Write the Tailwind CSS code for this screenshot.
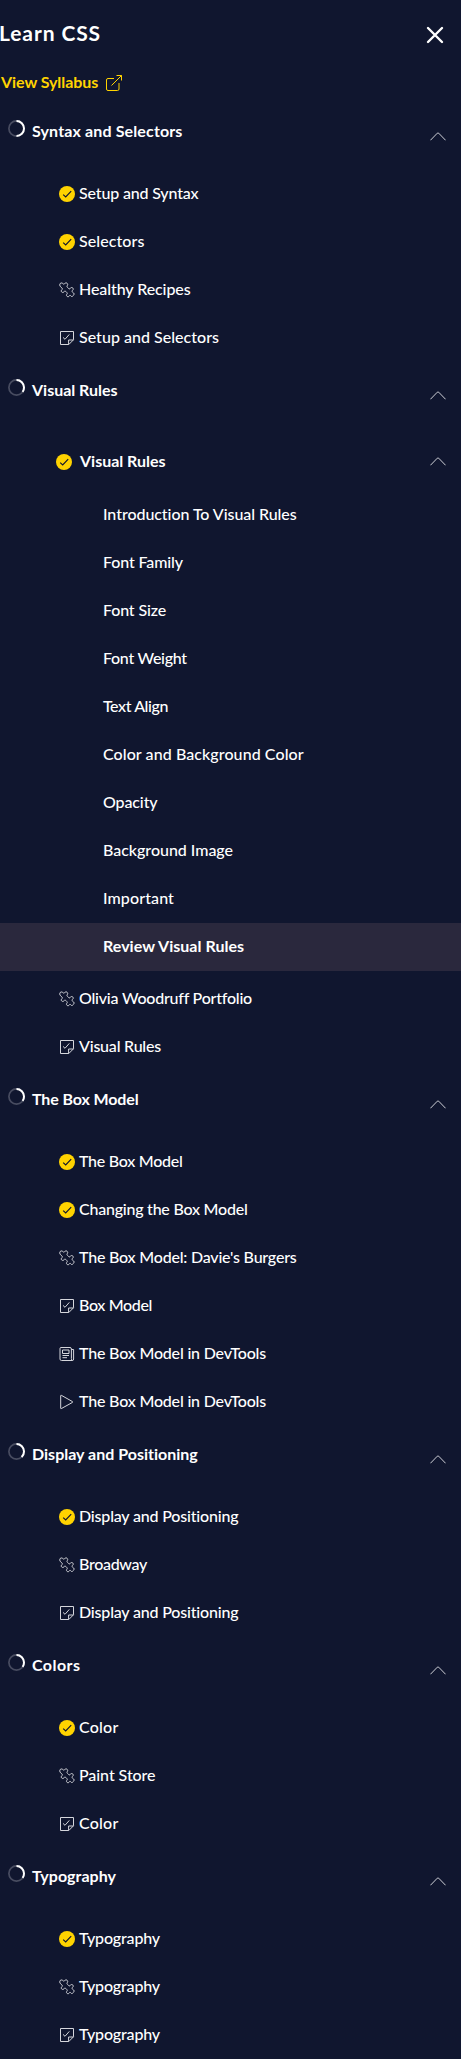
<!DOCTYPE html>
<html lang="en">
<head>
<meta charset="utf-8">
<title>Learn CSS</title>
<script src="https://cdn.jsdelivr.net/npm/@tailwindcss/browser@4"></script>
</head>
<body class="bg-[#10162f] font-['Lato','Open_Sans',sans-serif] text-base font-medium text-white">
<svg class="hidden">
  <symbol id="check" viewBox="0 0 16 16"><circle cx="8" cy="8" r="8" fill="#ffd300"/><path d="M4.2 8.7 6.7 11 12.2 5.2" fill="none" stroke="#10162f" stroke-width="1.15"/></symbol>
  <symbol id="puzzle" viewBox="0 0 16 16"><path d="M1.4 1.3C2.2.6 3.3 1 4 1.7 4.7 2.3 5.300 2.300 5.700 1.600 6.200.8 7.200.6 8 1.200 8.900 1.900 8.900 2.900 8.300 3.600 7.700 4.400 8.100 5 8.900 5.800L9.700 6.600C10.400 7.200 10.900 6.800 11.400 6.100 12.100 5.300 13.200 5.400 13.900 6.100 14.500 6.900 14.200 7.900 13.500 8.400 12.700 9 12.800 9.600 13.500 10.100L14.600 11C15.300 11.700 15.100 12.600 14.500 13.300L13.600 14.200C12.900 14.800 12.200 14.500 11.800 13.800 11.300 13.100 10.600 13.200 10.300 13.900 9.900 14.700 8.900 15 8.100 14.400 7.300 13.700 7.300 12.900 7.900 12.200 8.500 11.500 8.300 11 7.600 10.300L6.700 9.400C6 8.800 5.500 9.100 5 9.800 4.400 10.600 3.300 10.700 2.600 9.900 1.900 9.200 2.200 8.200 3 7.700 3.700 7.200 3.600 6.700 2.900 6L1.500 4.700C.7 3.900.4 2.300 1.400 1.300Z" fill="none" stroke="#d5d6dc" stroke-width="1"/></symbol>
  <symbol id="quiz" viewBox="0 0 16 16"><path d="M1.500 1.500H14.500V9.800L9.800 14.500H1.500Z M9.600 14.300V10H14.400M4 7.400 6 9.300 10.300 4.400" fill="none" stroke="#d5d6dc" stroke-width="1" stroke-linejoin="round"/></symbol>
  <symbol id="article" viewBox="0 0 16 16"><path d="M2 1.500H11Q12.400 1.500 12.400 3V12.500Q12.400 14.500 13.500 14.500H2.500Q1 14.500 1 13V2.500Q1 1.500 2 1.500ZM12.400 3.500H14.600V13Q14.600 14.500 13.500 14.500M3.500 4H10V7.500H3.500ZM3.500 9.500H10M3.500 11.700H8" fill="none" stroke="#d5d6dc" stroke-width="1"/></symbol>
  <symbol id="video" viewBox="0 0 16 16"><path d="M1.700 1.700V14.300Q1.700 14.900 2.300 14.600L13.500 8.400Q14 8 13.500 7.600L2.300 1.300Q1.700 1 1.700 1.700Z" fill="none" stroke="#d5d6dc" stroke-width="1"/></symbol>
  <symbol id="chevron" viewBox="0 0 16 9"><path d="M.4 8.300 7.300 1.200Q8 .5 8.700 1.200L15.600 8.300" fill="none" stroke="#d0d1d8" stroke-width="1"/></symbol>
</svg>

<header class="flex h-[70px] items-start justify-between pr-[17px]">
  <h1 class="-ml-px pt-[19px] text-[21px] leading-[28px] font-bold whitespace-nowrap" data-font="700 21px Lato" data-width="102">Learn CSS</h1>
  <svg class="mt-[26px] h-[18px] w-[18px]" viewBox="0 0 18 18"><path d="M2 2 16 16M16 2 2 16" stroke="#fff" stroke-width="2.400" stroke-linecap="round"/></svg>
</header>
<a class="flex h-[33px] items-start pl-px leading-6 font-bold text-[#ffd300]">
  <span class="w-[105px] whitespace-nowrap"><span data-font="700 16px Lato" data-width="97.5">View Syllabus</span></span>
  <svg class="mt-[5px] h-4 w-4" viewBox="0 0 16 16"><path d="M8 3.500H2Q.5 3.500.5 5V14Q.5 15.500 2 15.500H11.500Q13 15.500 13 14V8M5.500 10.500 15.500.5M10.500.5H15.500V5.500" fill="none" stroke="#ffd300"/></svg>
</a>
<nav id="syllabus"></nav>

<script>
const sections = [
  { title: 'Syntax and Selectors', width: 150.5, done: 50, items: [
    ['check', 'Setup and Syntax', 119.5], ['check', 'Selectors', 65.5], ['puzzle', 'Healthy Recipes', 112], ['quiz', 'Setup and Selectors', 140]] },
  { title: 'Visual Rules', width: 85.5, done: 35,
    lesson: { title: 'Visual Rules', width: 85.5, exercises: [
      ['Introduction To Visual Rules', 195], ['Font Family', 80], ['Font Size', 63], ['Font Weight', 84], ['Text Align', 65.5], ['Color and Background Color', 201], ['Opacity', 54.5], ['Background Image', 130], ['Important', 71], ['Review Visual Rules', 142]] },
    items: [['puzzle', 'Olivia Woodruff Portfolio', 172.5], ['quiz', 'Visual Rules', 82]] },
  { title: 'The Box Model', width: 106.5, done: 35, items: [
    ['check', 'The Box Model', 103.5], ['check', 'Changing the Box Model', 168.5], ['puzzle', "The Box Model: Davie's Burgers", 217.5], ['quiz', 'Box Model', 73], ['article', 'The Box Model in DevTools', 187], ['video', 'The Box Model in DevTools', 187]] },
  { title: 'Display and Positioning', width: 166.5, done: 38, items: [
    ['check', 'Display and Positioning', 160], ['puzzle', 'Broadway', 68], ['quiz', 'Display and Positioning', 160]] },
  { title: 'Colors', width: 48.5, done: 35, items: [
    ['check', 'Color', 39.5], ['puzzle', 'Paint Store', 76.5], ['quiz', 'Color', 39.5]] },
  { title: 'Typography', width: 84, done: 35, items: [
    ['check', 'Typography', 81], ['puzzle', 'Typography', 81], ['quiz', 'Typography', 81]] },
];
const label = (text, width, weight = 500) => `<span class="block pb-0.5 whitespace-nowrap" data-font="${weight} 16px Lato" data-width="${width}">${text}</span>`;
const chevron = (cls) => `<svg class="${cls}"><use href="#chevron"/></svg>`;
const head = (s) => `
  <h2 class="flex h-[67px] items-start pr-[15px] pl-2 leading-6 font-bold">
    <svg class="mt-[17px] h-[17px] w-[17px]" viewBox="0 0 17 17"><circle cx="8.500" cy="8.500" r="7.600" fill="none" stroke="#484c60" stroke-width="1.700"/><circle cx="8.500" cy="8.500" r="7.500" fill="none" stroke="#fff" stroke-width="2" pathLength="100" stroke-dasharray="${s.done} 100" transform="rotate(-90 8.500 8.500)"/></svg>
    <span class="grow pt-4 pl-[7px]">${label(s.title, s.width, 700)}</span>
    ${chevron('mt-[29px] h-[9px] w-4')}
  </h2>`;
const lesson = (l) => `
  <h3 class="flex h-[62px] items-center pt-1 pr-[15px] pl-14 font-bold">
    <svg class="h-4 w-4"><use href="#check"/></svg>
    <span class="grow pl-2">${label(l.title, l.width, 700)}</span>
    ${chevron('mb-px h-[9px] w-4')}
  </h3>
  <ul class="mb-1">${l.exercises.map(([t, w], i) => `
    <li class="${i === l.exercises.length - 1 ? 'flex h-12 items-center bg-[#2a283d] pl-[103px] font-bold' : 'flex h-12 items-center pl-[103px]'}">${label(t, w, i === l.exercises.length - 1 ? 700 : 500)}</li>`).join('')}
  </ul>`;
const item = ([icon, text, width]) => `
  <li class="flex h-12 items-center gap-1 pl-[59px]"><svg class="h-4 w-4"><use href="#${icon}"/></svg>${label(text, width)}</li>`;
document.getElementById('syllabus').innerHTML = sections.map((s) =>
  `<section>${head(s)}${s.lesson ? lesson(s.lesson) : ''}<ul>${s.items.map(item).join('')}</ul></section>`).join('');

const pen = document.createElement('canvas').getContext('2d');
document.querySelectorAll('[data-width]').forEach((el) => {
  pen.font = el.dataset.font;
  const gap = (el.dataset.width - pen.measureText(el.textContent).width) / el.textContent.length;
  el.style.letterSpacing = gap.toFixed(3) + 'px';
});
</script>
</body>
</html>
